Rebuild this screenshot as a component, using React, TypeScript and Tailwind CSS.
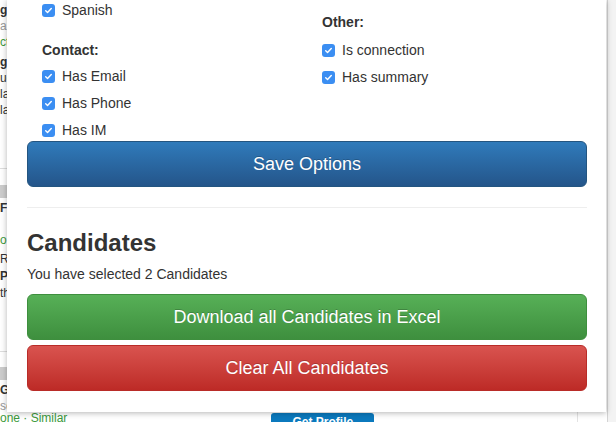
import type { ReactNode } from 'react';

function Check({ label }: { label: string }) {
  return (
    <label className="flex h-5 items-center gap-[7px] text-[14px] text-[#333]">
      <span className="flex h-[13px] w-[13px] items-center justify-center rounded-[3px] bg-[#3b8ef2]">
        <svg viewBox="0 0 12 12" className="h-[9px] w-[9px]">
          <path
            d="M2.3 6.4l2.4 2.3L9.7 3.4"
            stroke="white"
            strokeWidth="1.9"
            fill="none"
            strokeLinecap="round"
            strokeLinejoin="round"
          />
        </svg>
      </span>
      {label}
    </label>
  );
}

function BigButton({ children, className }: { children: ReactNode; className: string }) {
  return (
    <button
      className={`flex h-[46px] w-full items-center justify-center rounded-[6px] border text-[18px] text-white [text-shadow:0_-1px_0_rgba(0,0,0,0.2)] ${className}`}
    >
      {children}
    </button>
  );
}

function BgLine({ children, className = '' }: { children: ReactNode; className?: string }) {
  return <div className={`h-4 text-[12px] leading-4 whitespace-nowrap ${className}`}>{children}</div>;
}

export default function App() {
  return (
    <div className="relative h-[422px] w-[616px] overflow-hidden bg-white font-['Liberation_Sans',Arial,sans-serif] text-[#333]">
      {/* page behind the panel */}
      <div className="flex h-full">
        <div className="w-[577px]">
          <BgLine className="mt-[2px] font-bold">g</BgLine>
          <BgLine className="text-[#999]">ar</BgLine>
          <BgLine className="text-[#3c9a3c]">ct</BgLine>
          <BgLine className="mt-[4px] font-bold">g</BgLine>
          <BgLine>uc</BgLine>
          <BgLine>la</BgLine>
          <BgLine>la</BgLine>
          <div className="mt-[50px] border-t border-[#ddd]" />
          <div className="mt-[16px] h-[13px] w-[7px] bg-[#ccc]" />
          <BgLine className="mt-[2px] font-bold">Fe</BgLine>
          <BgLine className="mt-[16px] text-[#3c9a3c]">o</BgLine>
          <BgLine className="mt-[3px]">Re</BgLine>
          <BgLine className="mt-[1px] font-bold">Pa</BgLine>
          <BgLine className="mt-[1px]">th</BgLine>
          <div className="mt-[50px] border-t border-[#ddd]" />
          <div className="mt-[15px] h-[13px] w-[8px] bg-[#ccc]" />
          <BgLine className="mt-[2px] font-bold">Gl</BgLine>
          <div className="mt-[3px] h-[11px] text-[12px] leading-[11px] text-[#999]">sc</div>
          <div className="flex items-start">
            <span className="text-[12px] leading-3 whitespace-nowrap text-[#3c9a3c]">one · Similar</span>
            <span className="mt-[1px] ml-[204px] flex h-[30px] w-[103px] justify-center rounded-[3px] bg-[#0b79bd] pt-[3px] text-[12px] leading-3 font-bold text-white">
              Get Profile
            </span>
          </div>
        </div>
        <div className="w-[30px] border-l border-[#e3e3e3]" />
        <div className="flex-1 border-l border-[#d4d4d4] bg-[#f3f3f3]" />
      </div>

      {/* options panel */}
      <div className="absolute top-0 left-[7px] w-[599px] bg-white pr-[19px] pb-[21px] pl-5 shadow-[0_1px_6px_rgba(0,0,0,0.3)]">
        <div className="grid grid-cols-[295px_1fr] items-start">
          <div className="flex flex-col pl-[15px]">
            <Check label="Spanish" />
            <div className="mt-5 flex h-5 items-center text-[14px] font-bold">Contact:</div>
            <div className="mt-[6px] flex flex-col gap-[7px]">
              <Check label="Has Email" />
              <Check label="Has Phone" />
              <Check label="Has IM" />
            </div>
          </div>
          <div className="flex flex-col pt-3">
            <div className="flex h-5 items-center text-[14px] font-bold">Other:</div>
            <div className="mt-2 flex flex-col gap-[7px]">
              <Check label="Is connection" />
              <Check label="Has summary" />
            </div>
          </div>
        </div>

        <div className="mt-[1px]">
          <BigButton className="border-[#245580] bg-linear-to-b from-[#307bbb] to-[#24558a]">Save Options</BigButton>
        </div>

        <div className="mt-5 border-t border-[#eee]" />

        <h3 className="mt-[22px] text-[24px] leading-[26px] font-bold text-[#333]">Candidates</h3>
        <p className="mt-[8px] text-[14px] leading-5">You have selected 2 Candidates</p>

        <div className="mt-[10px] flex flex-col gap-[5px]">
          <BigButton className="border-[#3e8f3e] bg-linear-to-b from-[#57b057] to-[#3e8f3e]">
            Download all Candidates in Excel
          </BigButton>
          <BigButton className="border-[#b92c28] bg-linear-to-b from-[#d9534f] to-[#bd2a26]">
            Clear All Candidates
          </BigButton>
        </div>
      </div>
    </div>
  );
}
